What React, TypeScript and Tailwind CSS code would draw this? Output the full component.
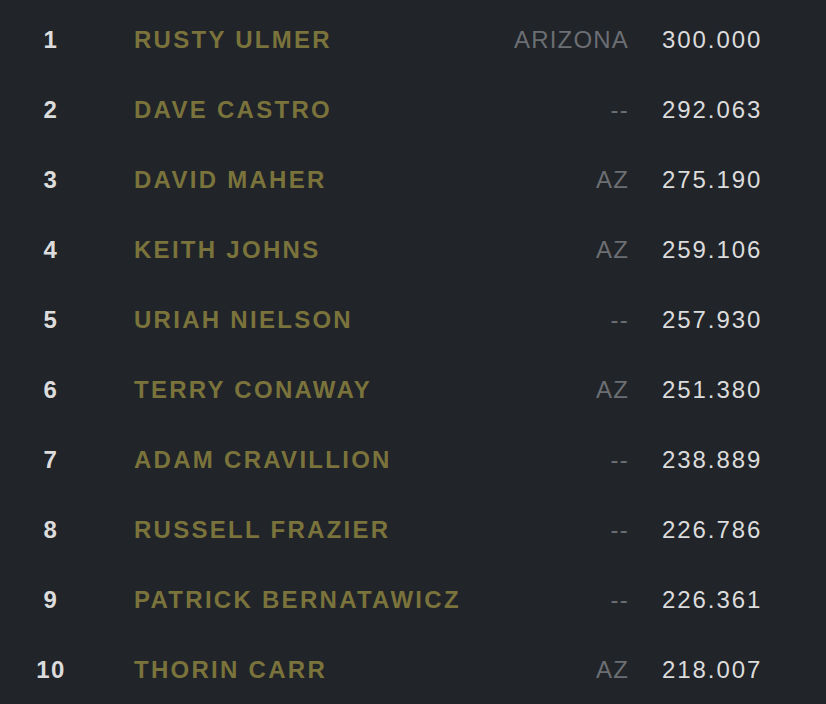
import React from 'react';

type Row = { rank: number; name: string; state: string; score: string };

const rows: Row[] = [
  { rank: 1, name: 'RUSTY ULMER', state: 'ARIZONA', score: '300.000' },
  { rank: 2, name: 'DAVE CASTRO', state: '--', score: '292.063' },
  { rank: 3, name: 'DAVID MAHER', state: 'AZ', score: '275.190' },
  { rank: 4, name: 'KEITH JOHNS', state: 'AZ', score: '259.106' },
  { rank: 5, name: 'URIAH NIELSON', state: '--', score: '257.930' },
  { rank: 6, name: 'TERRY CONAWAY', state: 'AZ', score: '251.380' },
  { rank: 7, name: 'ADAM CRAVILLION', state: '--', score: '238.889' },
  { rank: 8, name: 'RUSSELL FRAZIER', state: '--', score: '226.786' },
  { rank: 9, name: 'PATRICK BERNATAWICZ', state: '--', score: '226.361' },
  { rank: 10, name: 'THORIN CARR', state: 'AZ', score: '218.007' },
];

const App: React.FC = () => {
  return (
    <div className="min-h-screen bg-[#212429] pt-[5px] pr-[64px] font-['Liberation_Sans',Arial,sans-serif] text-[24px]">
      {rows.map((r) => (
        <div key={r.rank} className="flex h-[70px] items-center leading-none">
          <div className="w-[102px] text-center font-bold tracking-[0.06em] text-[#dcdcdc]">{r.rank}</div>
          <div className="flex-1 pl-[32px] font-bold tracking-[0.095em] text-[#7a733b]">{r.name}</div>
          <div className="text-right tracking-[0.05em] text-[#6b6e72]">{r.state}</div>
          <div className="ml-[33px] w-[100px] whitespace-nowrap tracking-[0.08em] text-[#dcdcdc]">{r.score}</div>
        </div>
      ))}
    </div>
  );
};

export default App;
